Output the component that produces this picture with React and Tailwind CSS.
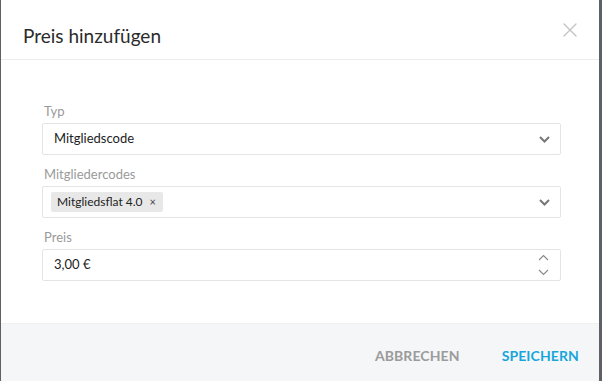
import { X } from "lucide-react";

function Chevron({ up = false, thin = false }) {
  return (
    <svg width="11" height="7" viewBox="0 0 11 7" className="block">
      <path
        d={up ? "M1 6 L5.5 1.5 L10 6" : "M1 1 L5.5 5.5 L10 1"}
        fill="none"
        stroke={thin ? "#8a8a8a" : "#777"}
        strokeWidth={thin ? 1.2 : 2}
      />
    </svg>
  );
}

function Field({ label, children }) {
  return (
    <div className="flex flex-col">
      <label className="text-[13px] leading-[16px] text-[#9a9a9a] pl-[2px]">{label}</label>
      <div className="mt-[4px] h-[32px] border border-[#e4e4e4] rounded-[2px] flex items-center pl-[11px] pr-[10px]">
        {children}
      </div>
    </div>
  );
}

export default function App() {
  return (
    <div className="w-[602px] h-[381px] bg-[#5d6164] overflow-hidden" style={{ fontFamily: "Lato, 'Open Sans', sans-serif" }}>
      <div className="ml-[1px] w-[598px] h-[381px] bg-white flex flex-col">
        {/* Header */}
        <div className="h-[60px] border-b border-[#ececec] flex items-start justify-between pl-[22px] pr-[17px] pt-[25px]">
          <h2 className="text-[19px] leading-[22px] text-[#2b2b2b]">Preis hinzufügen</h2>
          <X className="w-[24px] h-[24px] -mt-[7px] text-[#c4c4c4]" strokeWidth={1.4} />
        </div>

        {/* Body */}
        <div className="flex-1 pt-[43px] pl-[41px] pr-[38px] flex flex-col gap-[11px]">
          <Field label="Typ">
            <span className="flex-1 text-[13px] text-[#222]">Mitgliedscode</span>
            <Chevron />
          </Field>
          <Field label="Mitgliedercodes">
            <div className="flex-1 flex items-center -ml-[3px]">
              <span className="h-[20px] bg-[#e8e8e8] rounded-[2px] flex items-center pl-[6px] pr-[7px] text-[12px] text-[#222]">
                Mitgliedsflat 4.0
                <span className="ml-[7px] text-[11px] text-[#444]">×</span>
              </span>
            </div>
            <Chevron />
          </Field>
          <Field label="Preis">
            <span className="flex-1 text-[13px] text-[#222]">3,00 €</span>
            <div className="flex flex-col gap-[8px] mr-[1px]">
              <Chevron up thin />
              <Chevron thin />
            </div>
          </Field>
        </div>

        {/* Footer */}
        <div className="h-[58px] bg-[#f5f6f8] border-t border-[#eef0f2] flex items-center justify-end gap-[42px] pr-[20px] pt-[6px]">
          <button className="text-[14px] font-bold tracking-[0.1px] text-[#9b9b9b]">ABBRECHEN</button>
          <button className="text-[14px] font-bold tracking-[0.1px] text-[#17a6dc]">SPEICHERN</button>
        </div>
      </div>
    </div>
  );
}
